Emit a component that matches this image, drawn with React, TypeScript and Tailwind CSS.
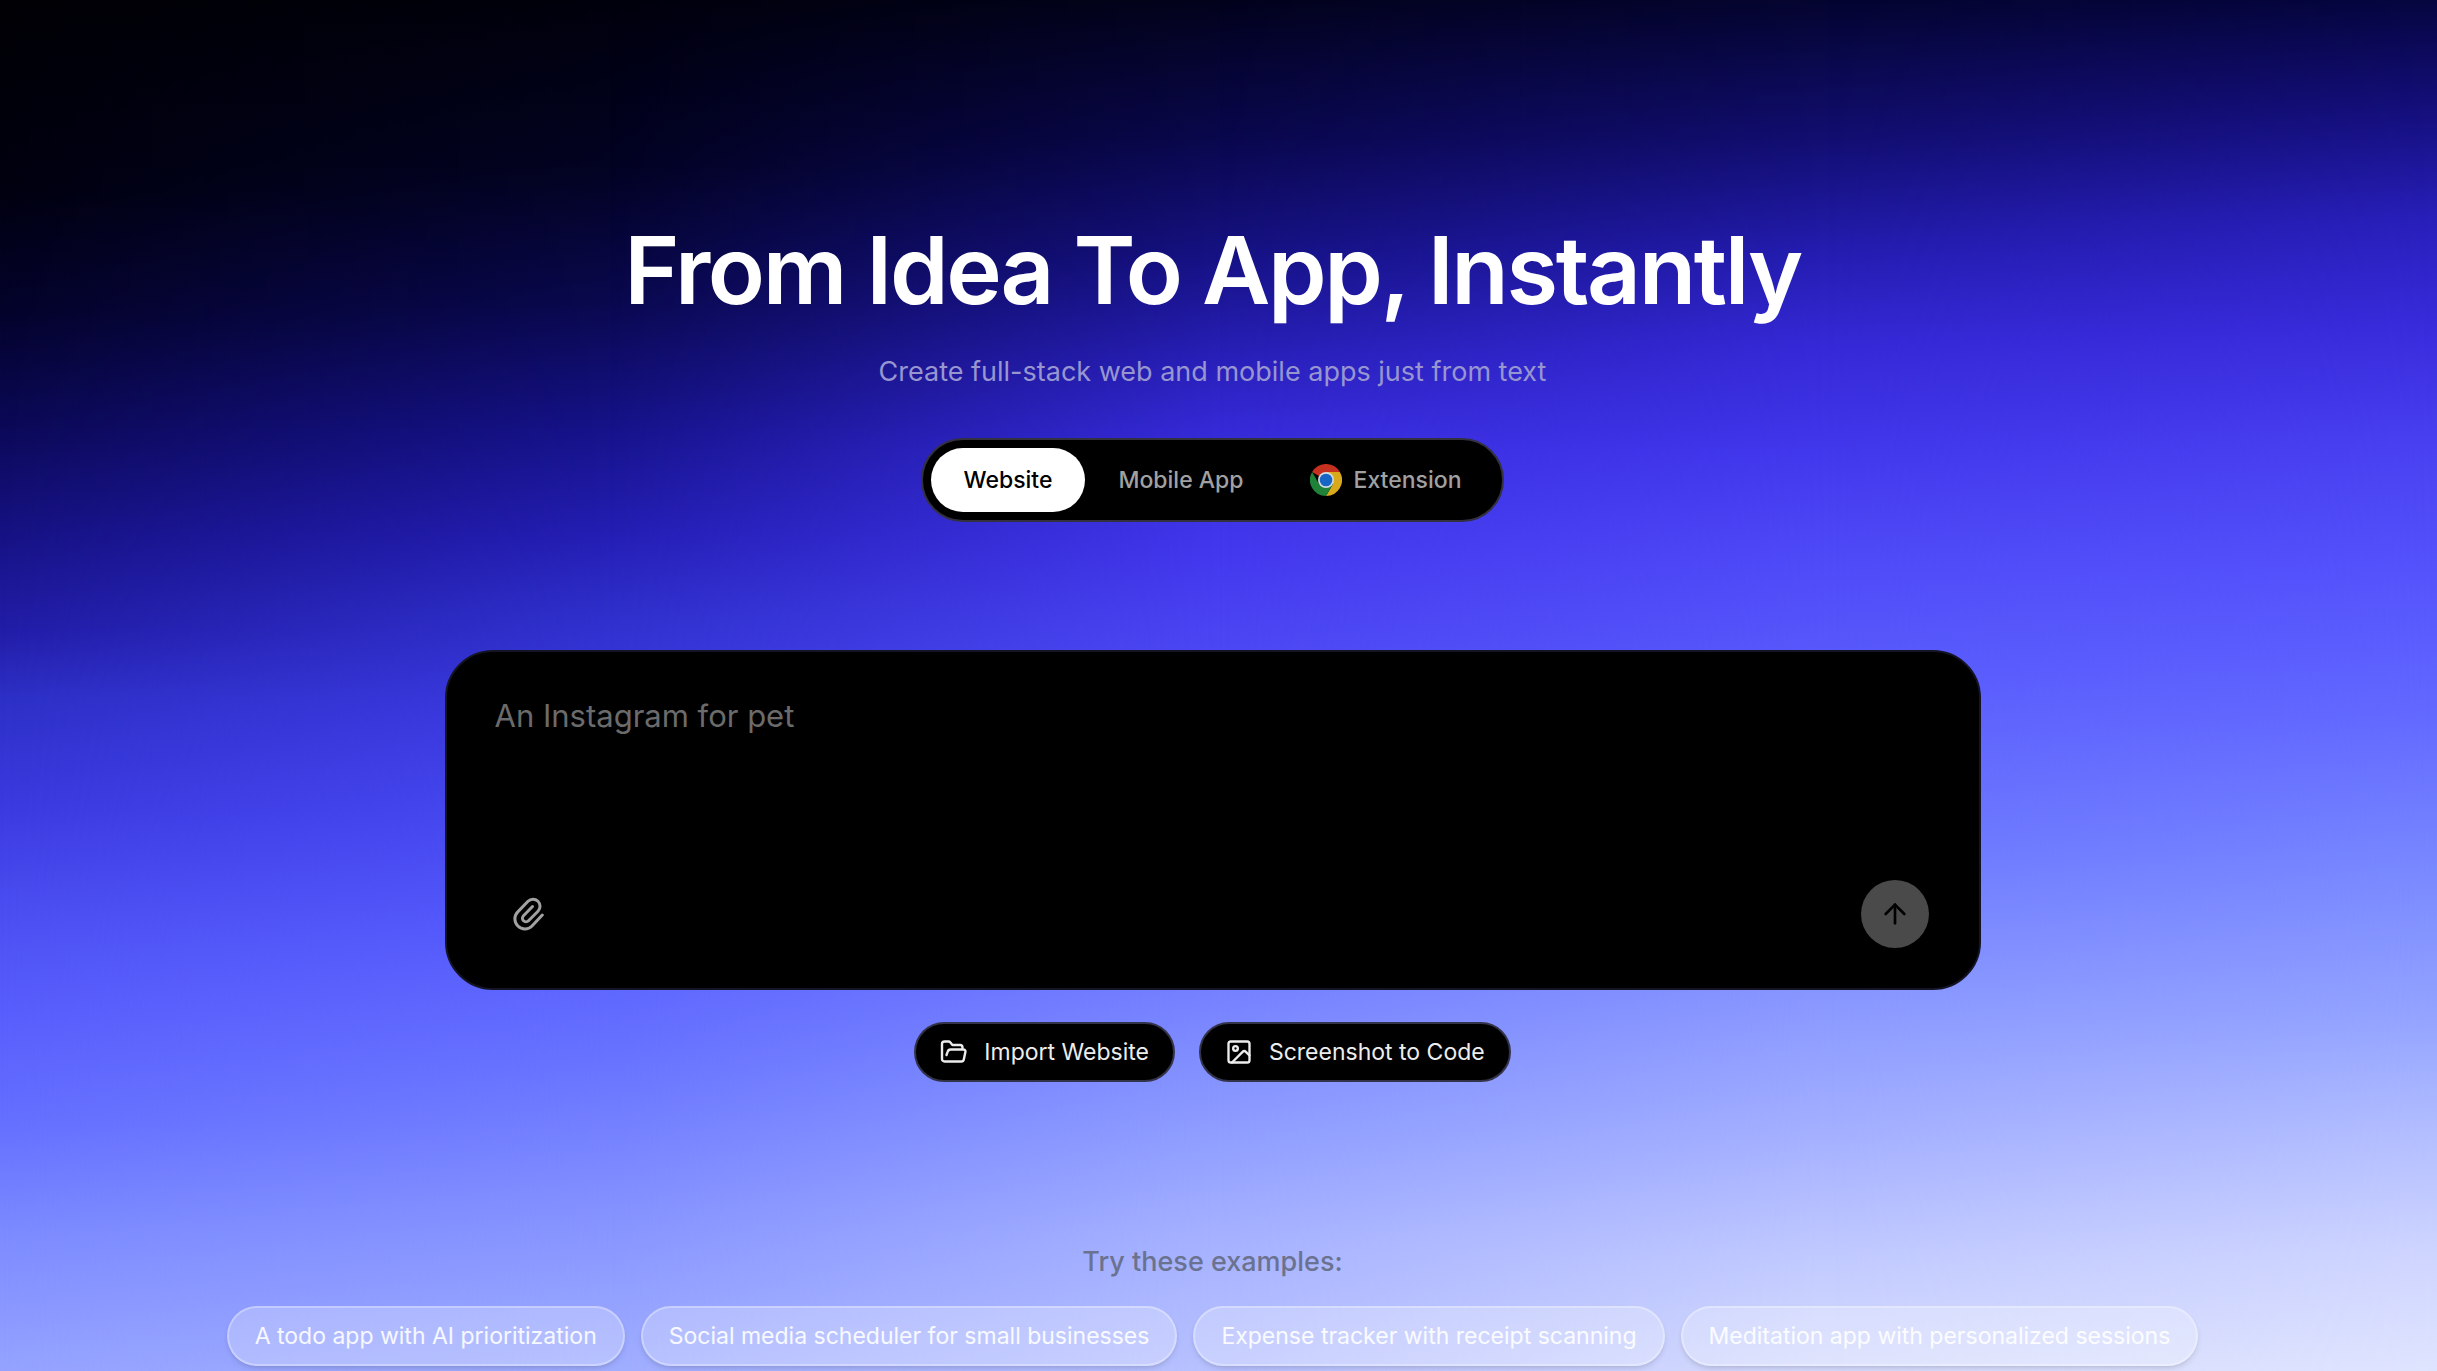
import { ArrowUp, Image as ImageIcon } from "lucide-react";

const examples = [
  "A todo app with AI prioritization",
  "Social media scheduler for small businesses",
  "Expense tracker with receipt scanning",
  "Meditation app with personalized sessions",
];

/* Vertical ramps at 0, 25, 50, 75 and 100% of the width, cross-faded from left to right. */
function Backdrop() {
  return (
    <div aria-hidden="true" className="absolute inset-0 -z-10">
      <div className="absolute inset-0 bg-[linear-gradient(to_bottom,#000005_0%,#010110_14%,#04032c_23%,#0b0956_31%,#161284_39%,#221da8_46%,#2d30c6_51%,#3b3ae0_59%,#4c50f2_67%,#585efc_74%,#6570ff_82%,#7c8bff_90%,#95a3ff_100%)]" />
      <div className="absolute inset-0 bg-[linear-gradient(to_bottom,#00000c_0%,#020222_12%,#09084e_22%,#151288_31%,#241eb4_39%,#2f30cc_45%,#3d3be4_52%,#4a4cf4_60%,#575dfe_68%,#6975ff_78%,#8391ff_88%,#a0aeff_100%)] [mask-image:linear-gradient(to_right,transparent_0%,black_25%)]" />
      <div className="absolute inset-0 bg-[linear-gradient(to_bottom,#02021c_0%,#09074c_10%,#161286_19%,#281fb8_26%,#392de0_33%,#4439ee_41%,#4f4df6_50%,#5a60fb_60%,#7480ff_72%,#8d9cff_82%,#a5b1ff_90%,#b8c2ff_100%)] [mask-image:linear-gradient(to_right,transparent_25%,black_50%)]" />
      <div className="absolute inset-0 bg-[linear-gradient(to_bottom,#040430_0%,#110e70_10%,#231cae_18%,#3529d6_25%,#4238ec_33%,#4f4bf8_41%,#5a5dfc_50%,#6c78ff_62%,#8998ff_73%,#a5b1ff_83%,#c2cbff_92%,#d6dcfd_100%)] [mask-image:linear-gradient(to_right,transparent_50%,black_75%)]" />
      <div className="absolute inset-0 bg-[linear-gradient(to_bottom,#050540_0%,#140f7c_8%,#281fba_16%,#392cdc_24%,#4840f0_32%,#5554fc_42%,#6269ff_52%,#7888ff_63%,#93a3ff_74%,#b0bcff_82%,#cdd4ff_91%,#dfe4fe_100%)] [mask-image:linear-gradient(to_right,transparent_75%,black_100%)]" />
    </div>
  );
}

function ClipIcon() {
  return (
    <svg
      viewBox="0 0 31 34"
      className="h-[34px] w-[31px]"
      fill="none"
      stroke="currentColor"
      strokeWidth="3"
      strokeLinecap="round"
      strokeLinejoin="round"
      aria-hidden="true"
    >
      <path d="M29.3 18 19 29A10 10 0 0 1 4.8 14.9L15 4.3A7 7 0 0 1 25 14.2L15.5 23.8A3.5 3.5 0 0 1 10.5 18.8L19.5 9.5" />
    </svg>
  );
}

function FolderIcon() {
  return (
    <svg
      viewBox="0 0 28 28"
      className="size-7 shrink-0"
      fill="none"
      stroke="currentColor"
      strokeWidth="2.4"
      strokeLinecap="round"
      strokeLinejoin="round"
      aria-hidden="true"
    >
      <path d="M6.5 17 7.6 13.8A3.2 3.2 0 0 1 10.6 11.5H23.5A2 2 0 0 1 25.4 14L23.8 21.5A2.5 2.5 0 0 1 21.4 23.5H4.5A2.5 2.5 0 0 1 2 21V6A2.5 2.5 0 0 1 4.5 3.5H8.6A2 2 0 0 1 10.2 4.3L12.4 7H20A2.5 2.5 0 0 1 22.5 9.5V11.5" />
    </svg>
  );
}

function ChromeLogo() {
  return (
    <svg viewBox="0 0 48 48" className="size-8 shrink-0" aria-hidden="true">
      <path d="M24 24 3.2 12A24 24 0 0 1 44.8 12Z" fill="#c5301f" />
      <path d="M24 12H44.8A24 24 0 0 1 24 48L34.4 30Z" fill="#d9a91c" />
      <path d="M3.2 12A24 24 0 0 0 24 48L34.4 30 24 34 13.6 30Z" fill="#1f8239" />
      <circle cx="24" cy="24" r="12" fill="#d5dbe0" />
      <circle cx="24" cy="24" r="9.5" fill="#1765c4" />
    </svg>
  );
}

export default function App() {
  return (
    <main className="relative isolate flex min-h-screen flex-col items-center overflow-hidden pt-[220px] pr-11 pl-8 font-['Inter',sans-serif] text-2xl leading-8">
      <Backdrop />
      <h1 className="text-center text-[94px] leading-[100px] font-semibold tracking-tight text-white">
        From Idea To App, Instantly
      </h1>
      <p className="mt-8 text-center text-[27px] leading-10 text-[#9896cf]">
        Create full-stack web and mobile apps just from text
      </p>

      <div className="mt-[46px] flex items-center rounded-full border-2 border-[#333140] bg-black p-2 text-[23px] font-medium text-[#a1a1a1]">
        <button type="button" aria-pressed="true" className="rounded-full bg-white px-[33px] py-4 text-black">
          Website
        </button>
        <button type="button" aria-pressed="false" className="rounded-full px-[33px] py-4">
          Mobile App
        </button>
        <button type="button" aria-pressed="false" className="flex items-center gap-3 rounded-full px-[33px] py-4">
          <ChromeLogo />
          Extension
        </button>
      </div>

      <form
        onSubmit={(e) => e.preventDefault()}
        className="mt-32 flex w-full max-w-[1536px] flex-col rounded-[48px] border-2 border-[#141425] bg-black pt-10 pr-[50px] pb-10 pl-12"
      >
        <textarea
          aria-label="Describe your app"
          placeholder="An Instagram for pet"
          className="h-[188px] w-full resize-none bg-transparent text-[31px] leading-[48px] text-white outline-none placeholder:text-[#6b6b6b]"
        />
        <div className="flex items-center justify-between">
          <button type="button" aria-label="Attach file" className="flex size-[68px] items-center justify-center text-[#a1a1a1]">
            <ClipIcon />
          </button>
          <button type="submit" aria-label="Send" className="flex size-[68px] items-center justify-center rounded-full bg-[#4a4a4a] text-black">
            <ArrowUp className="size-8" />
          </button>
        </div>
      </form>

      <div className="mt-8 flex gap-6 text-[23px] text-[#ededed]">
        <button type="button" className="flex h-[60px] items-center gap-4 rounded-full border-2 border-[#33334a] bg-black px-6">
          <FolderIcon />
          Import Website
        </button>
        <button type="button" className="flex h-[60px] items-center gap-4 rounded-full border-2 border-[#33334a] bg-black px-6">
          <ImageIcon className="size-7" />
          Screenshot to Code
        </button>
      </div>

      <p className="mt-40 text-[27px] leading-10 font-medium text-[#6b7290]">Try these examples:</p>
      <div className="mt-6 flex gap-4 text-[23px] whitespace-nowrap text-white/90">
        {examples.map((label) => (
          <button
            key={label}
            type="button"
            className="h-[60px] rounded-full border-2 border-white/30 bg-white/25 px-[26px] shadow-md"
          >
            {label}
          </button>
        ))}
      </div>
    </main>
  );
}
